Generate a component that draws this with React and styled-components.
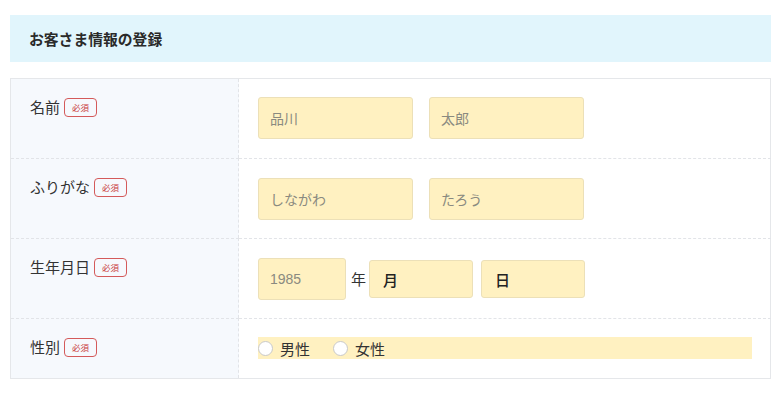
import React from 'react'
import styled, { createGlobalStyle } from 'styled-components'

const GlobalStyle = createGlobalStyle`
  body {
    margin: 0;
    background: #fff;
    font-family: "Noto Sans CJK JP", "Noto Sans", sans-serif;
    color: #333;
  }
`

const Wrap = styled.div`
  width: 761px;
  margin: 0 0 0 10px;
  padding-top: 15px;
`

const Heading = styled.h2`
  margin: 0 0 16px;
  height: 47px;
  display: flex;
  align-items: center;
  padding-left: 19px;
  background: #e1f5fc;
  font-size: 14.8px;
  font-weight: 700;
  color: #2a2a2a;
`

const Table = styled.div`
  border: 1px solid #e5e7ea;
  display: grid;
  grid-template-columns: 228px 1fr;
`

const Label = styled.div`
  background: #f6f9fd;
  border-right: 1px dashed #e2e4e8;
  border-top: ${p => (p.first ? 'none' : '1px dashed #e2e4e8')};
  height: ${p => p.h}px;
  box-sizing: border-box;
  padding: 17px 0 0 19px;
  display: flex;
  align-items: flex-start;
  gap: 4px;
  font-size: 15px;
  line-height: 22px;
  color: #333;
`

const Badge = styled.span`
  display: inline-flex;
  align-items: center;
  justify-content: center;
  box-sizing: border-box;
  width: 33px;
  height: 19px;
  margin-top: 2px;
  border: 1px solid #d45a5a;
  border-radius: 4px;
  color: #c93b3b;
  font-size: 8.5px;
  line-height: 1;
`

const Field = styled.div`
  border-top: ${p => (p.first ? 'none' : '1px dashed #e2e4e8')};
  height: ${p => p.h}px;
  box-sizing: border-box;
  padding: ${p => p.pt}px 19px 0;
  display: flex;
  align-items: ${p => p.align || 'flex-start'};
  gap: ${p => p.gap ?? 16}px;
`

const Input = styled.input`
  box-sizing: border-box;
  width: ${p => p.w}px;
  height: ${p => p.h || 42}px;
  padding: 0 11px;
  background: #fff1c1;
  border: 1px solid #ece0b8;
  border-radius: 3px;
  font-family: inherit;
  font-size: 14px;
  color: #333;
  outline: none;
  &::placeholder {
    color: #8a8a80;
  }
`

const YearInput = styled(Input)`
  font-family: "Liberation Sans", Arial, sans-serif;
`

const Select = styled.select`
  appearance: none;
  box-sizing: border-box;
  width: 104px;
  height: 38px;
  margin-top: 2px;
  margin-left: ${p => p.ml || 0}px;
  padding: 0 0 0 13px;
  background: #fff1c1;
  border: 1px solid #ece0b8;
  border-radius: 3px;
  font-family: inherit;
  font-size: 15px;
  font-weight: 500;
  color: #222;
  outline: none;
`

const Unit = styled.span`
  font-size: 15px;
  line-height: 42px;
  margin: 0 3px 0 5px;
  color: #333;
`

const RadioBar = styled.div`
  width: 494px;
  height: 22px;
  background: #fff1c1;
  display: flex;
  align-items: center;
  gap: 23px;
`

const RadioLabel = styled.label`
  display: flex;
  align-items: center;
  gap: 7px;
  font-size: 15px;
  color: #333;
`

const Circle = styled.span`
  width: 13px;
  height: 13px;
  border: 1px solid #c9c9c9;
  border-radius: 50%;
  background: #fff;
`

const Radio = ({ children }) => (
  <RadioLabel>
    <Circle />
    {children}
  </RadioLabel>
)

export default function App() {
  return (
    <Wrap>
      <GlobalStyle />
      <Heading>お客さま情報の登録</Heading>
      <Table>
        <Label first h={79}>名前<Badge>必須</Badge></Label>
        <Field first h={79} pt={18}>
          <Input w={155} placeholder="品川" />
          <Input w={155} placeholder="太郎" />
        </Field>

        <Label h={80}>ふりがな<Badge>必須</Badge></Label>
        <Field h={80} pt={19}>
          <Input w={155} placeholder="しながわ" />
          <Input w={155} placeholder="たろう" />
        </Field>

        <Label h={80}>生年月日<Badge>必須</Badge></Label>
        <Field h={80} pt={19} gap={0}>
          <YearInput w={88} placeholder="1985" />
          <Unit>年</Unit>
          <Select><option>月</option></Select>
          <Select ml={8}><option>日</option></Select>
        </Field>

        <Label h={60}>性別<Badge>必須</Badge></Label>
        <Field h={60} pt={18}>
          <RadioBar>
            <Radio>男性</Radio>
            <Radio>女性</Radio>
          </RadioBar>
        </Field>
      </Table>
    </Wrap>
  )
}
